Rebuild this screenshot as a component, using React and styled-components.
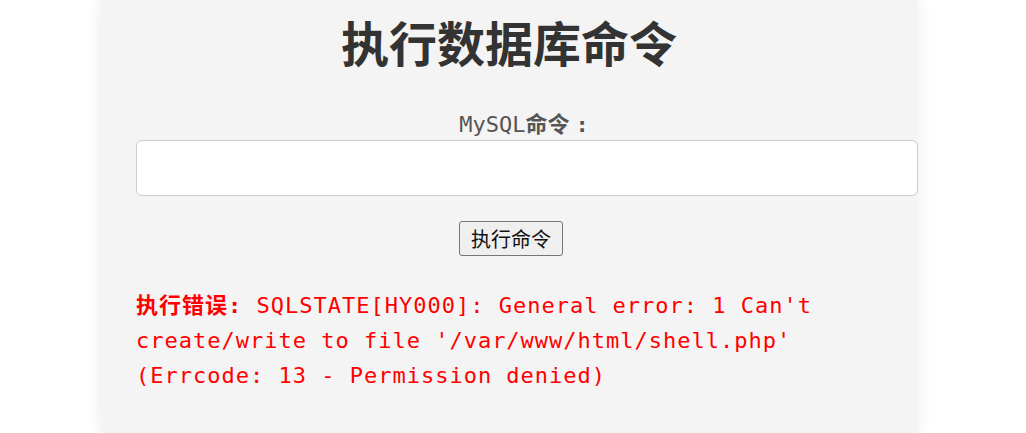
import React from 'react';
import styled, { createGlobalStyle } from 'styled-components';

const GlobalStyle = createGlobalStyle`
  html, body {
    margin: 0;
    padding: 0;
    background: #fff;
  }
`;

const Page = styled.div`
  display: flex;
  padding-left: 101px;
  height: 433px;
  overflow: hidden;
`;

const Card = styled.div`
  width: 816px;
  box-sizing: border-box;
  padding: 7px 35px 0;
  background: #f4f4f4;
  box-shadow: 0 0 16px rgba(0, 0, 0, 0.09);
  display: flex;
  flex-direction: column;
`;

const Title = styled.h1`
  margin: 0;
  text-align: center;
  font-family: "Noto Sans CJK SC", sans-serif;
  font-size: 48px;
  font-weight: 700;
  line-height: 68px;
  color: #333;
`;

const Label = styled.label`
  display: block;
  margin-top: 35px;
  padding-left: 30px;
  text-align: center;
  font-family: "DejaVu Sans Mono", "Noto Sans CJK SC", monospace;
  font-size: 22px;
  line-height: 30px;
  color: #555;
`;

const Strong = styled.strong`
  font-weight: ${p => (p.$light ? 400 : 700)};
`;

const Colon = styled.strong`
  margin-left: 6px;
`;

const Input = styled.input`
  display: block;
  width: 100%;
  height: 54px;
  margin: 0;
  padding: 0 17px;
  border: 1px solid #ccc;
  border-radius: 6px;
  background: #fff;
  font-size: 18px;
  outline: none;
`;

const ButtonRow = styled.div`
  display: flex;
  justify-content: center;
  padding-left: 4px;
  margin-top: 25px;
`;

const Button = styled.button`
  height: 35px;
  padding: 0 11px;
  border: 1px solid #767676;
  border-radius: 3px;
  background: #efefef;
  color: #111;
  font-family: "Noto Sans CJK SC", sans-serif;
  font-size: 20px;
  line-height: 33px;
`;

const ErrorText = styled.p`
  margin: 32px 0 0;
  font-family: "DejaVu Sans Mono", "Noto Sans CJK SC", monospace;
  font-size: 22px;
  letter-spacing: 1px;
  line-height: 35px;
  color: #ff0000;
`;

export default function App() {
  return (
    <>
      <GlobalStyle />
      <Page>
        <Card>
          <Title>执行数据库命令</Title>
          <Label htmlFor="cmd">
            <Strong $light>MySQL</Strong>
            <Strong>命令</Strong>
            <Colon>:</Colon>
          </Label>
          <Input id="cmd" type="text" />
          <ButtonRow>
            <Button>执行命令</Button>
          </ButtonRow>
          <ErrorText>
            <Strong>执行错误:</Strong> SQLSTATE[HY000]: General error: 1 Can't
            create/write to file '/var/www/html/shell.php' (Errcode: 13 - Permission denied)
          </ErrorText>
        </Card>
      </Page>
    </>
  );
}
